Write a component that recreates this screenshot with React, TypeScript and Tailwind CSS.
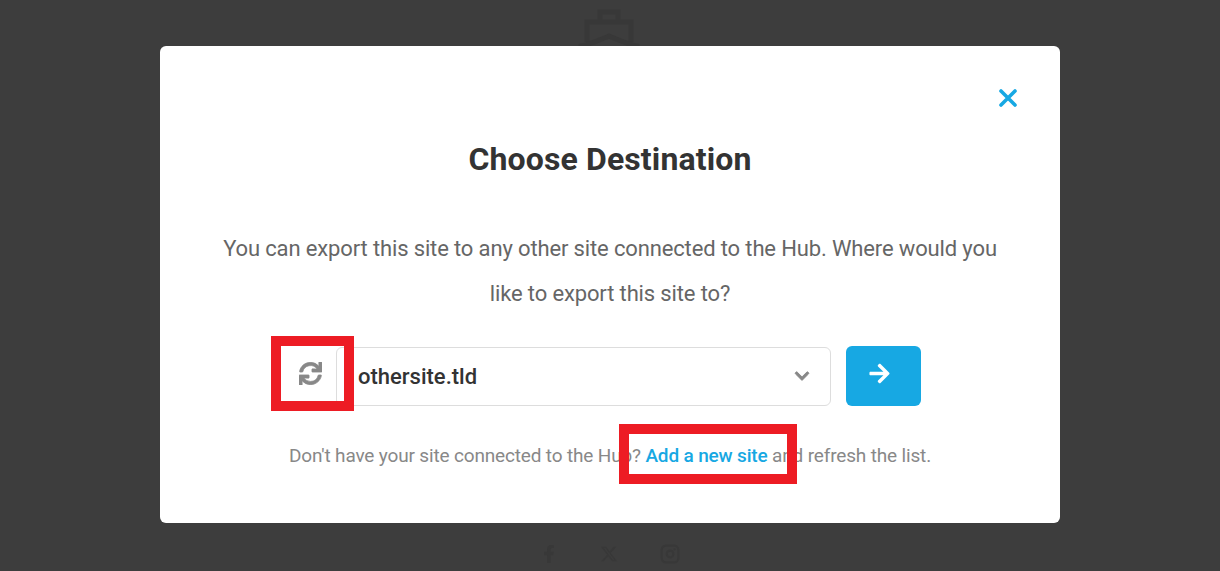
import { FaArrowRight, FaChevronDown, FaFacebookF, FaSync } from "react-icons/fa";
import { FaXTwitter } from "react-icons/fa6";
import { Instagram } from "lucide-react";

function HubLogo() {
  return (
    <svg width="64" height="46" viewBox="0 0 64 46" fill="none" stroke="#383838" strokeWidth="5">
      <path d="M22 12V4h18v8" />
      <path d="M9 34V14h44v20" />
      <path d="M3 46V38c10-2 18-6 28-10 10 4 18 8 28 10v8" />
    </svg>
  );
}

export default function App() {
  return (
    <div className="relative h-[571px] w-[1220px] overflow-hidden bg-[#3d3d3d] font-['Roboto',sans-serif]">
      {/* Page behind the dialog */}
      <div className="flex h-full flex-col items-center justify-between">
        <div className="pt-[8px]">
          <HubLogo />
        </div>
        <div className="flex items-center gap-[42px] pb-[7px] text-[18px] text-[#383838]">
          <FaFacebookF />
          <FaXTwitter />
          <Instagram size={20} strokeWidth={2.6} />
        </div>
      </div>

      {/* Dialog */}
      <div className="absolute inset-0 flex items-start justify-center pt-[46px]">
        <div className="relative flex h-[477px] w-[900px] flex-col items-center rounded-[6px] bg-white">
          <button className="absolute right-[43px] top-[43px] text-[#17a8e3]">
            <svg width="18" height="18" viewBox="0 0 18 18" fill="none" stroke="currentColor" strokeWidth="3.6" strokeLinecap="round">
              <path d="M2 2l14 14M16 2L2 16" />
            </svg>
          </button>

          <h2 className="mt-[92px] text-[32px] font-bold leading-[42px] tracking-[0.12px] text-[#333]">Choose Destination</h2>

          <p className="mt-[46px] w-[800px] text-center text-[22px] leading-[45px] tracking-[-0.14px] text-[#666]">
            You can export this site to any other site connected to the Hub. Where would you like to export this site to?
          </p>

          <div className="ml-[111px] mt-[30px] flex h-[60px] w-[650px] items-center self-start">
            <div className="flex w-[65px] items-center justify-center pb-[6px] pl-[13px] text-[23px] text-[#888]">
              <FaSync stroke="currentColor" strokeWidth={16} />
            </div>
            <div className="flex h-[59px] w-[495px] items-center justify-between rounded-[6px] border border-[#ddd] pl-[21px] pr-[20px]">
              <span className="text-[22px] font-medium text-[#333]">othersite.tld</span>
              <FaChevronDown stroke="currentColor" strokeWidth={30} className="text-[16px] text-[#888]" />
            </div>
            <button className="ml-[15px] flex h-[60px] w-[75px] items-center justify-center rounded-[6px] bg-[#17a8e3] pb-[6px] pr-[9px] text-[23px] text-white">
              <FaArrowRight />
            </button>
          </div>

          <p className="mt-[35px] text-[19px] leading-[30px] tracking-[-0.16px] text-[#888]">
            Don't have your site connected to the Hub? <a className="font-medium text-[#17a8e3]">Add a new site</a> and refresh the list.
          </p>
        </div>
      </div>

      {/* Red highlight boxes drawn over the screenshot */}
      <div className="absolute left-[271px] top-[336px] h-[75px] w-[83px] border-[10px] border-[#ed1c24]" />
      <div className="absolute left-[619px] top-[424px] h-[60px] w-[178px] border-[10px] border-[#ed1c24]" />
    </div>
  );
}
